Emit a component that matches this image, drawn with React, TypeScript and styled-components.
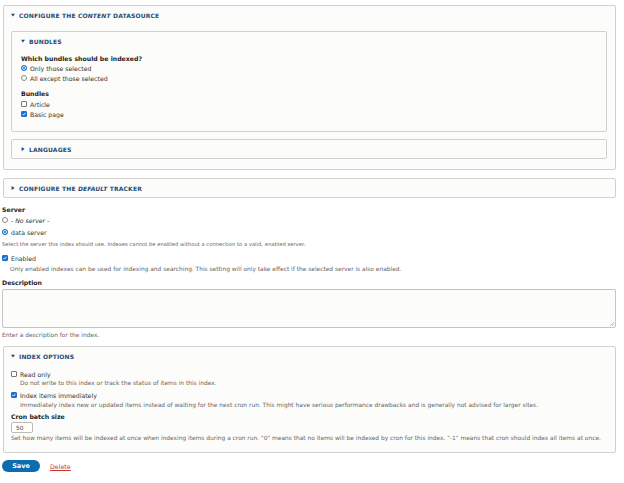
import React from 'react'
import styled, { createGlobalStyle } from 'styled-components'

const GlobalStyle = createGlobalStyle`
	body {
		margin: 0;
		background: #fff;
		font-family: "DejaVu Sans", "Liberation Sans", sans-serif;
		color: #222;
	}
`

const Page = styled.form`
	padding: 5px 8px 10px 2px;
`

const Box = styled.section<{ $gap?: number; $inner?: boolean }>`
	margin: ${p => p.$gap ?? 0}px 0 0 ${p => (p.$inner ? 0 : 1)}px;
	border: 1px solid #d0d0cc;
	border-radius: 2px;
	background: #fcfcfa;
`

const Summary = styled.div<{ $pad?: number }>`
	display: flex;
	align-items: center;
	gap: 4px;
	height: 18px;
	padding-left: ${p => p.$pad ?? 7}px;
	font-size: 6px;
	font-weight: bold;
	letter-spacing: 0.15px;
	text-transform: uppercase;
	color: #1f4b73;
	em {
		font-style: italic;
	}
`

const Body = styled.div<{ $pad: string }>`
	padding: ${p => p.$pad};
`

const Heading = styled.div<{ $gap?: number }>`
	margin-top: ${p => p.$gap ?? 0}px;
	font-size: 6.2px;
	font-weight: bold;
	line-height: 8px;
	color: #222;
`

const Row = styled.label<{ $h?: number; $gap?: number }>`
	display: flex;
	align-items: center;
	gap: 3px;
	margin-top: ${p => p.$gap ?? 0}px;
	height: ${p => p.$h ?? 10}px;
	font-size: 6.2px;
	color: #333;
	em {
		font-style: italic;
	}
`

const Hint = styled.div<{ $gap?: number; $indent?: number; $size?: number }>`
	margin-top: ${p => p.$gap ?? 0}px;
	padding-left: ${p => p.$indent ?? 0}px;
	font-size: ${p => p.$size ?? 5.9}px;
	line-height: 8px;
	color: #666;
	white-space: nowrap;
`

const RadioDot = styled.span<{ $on?: boolean }>`
	box-sizing: border-box;
	width: 6px;
	height: 6px;
	border-radius: 50%;
	border: 1px solid ${p => (p.$on ? '#1a6fd6' : '#8a8a8a')};
	background: ${p => (p.$on ? '#1a6fd6' : '#fff')};
	box-shadow: ${p => (p.$on ? 'inset 0 0 0 1px #fff' : 'none')};
	flex: none;
`

const Tick = styled.span<{ $on?: boolean }>`
	box-sizing: border-box;
	display: flex;
	align-items: center;
	justify-content: center;
	width: 6px;
	height: 6px;
	border-radius: 1px;
	border: 1px solid ${p => (p.$on ? '#1a6fd6' : '#777')};
	background: ${p => (p.$on ? '#1a6fd6' : '#fff')};
	flex: none;
`

const TextArea = styled.div`
	box-sizing: border-box;
	position: relative;
	margin-top: 2px;
	height: 39px;
	border: 1px solid #c4c4c0;
	border-radius: 2px;
	background: #fcfcfa;
`

const Grip = styled.svg`
	position: absolute;
	right: 1px;
	bottom: 1px;
`

const NumberInput = styled.div`
	box-sizing: border-box;
	display: flex;
	align-items: center;
	margin-top: 1px;
	width: 22px;
	height: 11px;
	padding-left: 4px;
	border: 1px solid #bdbdb8;
	border-radius: 2px;
	background: #fff;
	font-size: 5.8px;
	color: #444;
`

const Actions = styled.div`
	display: flex;
	align-items: center;
	gap: 10px;
	margin-top: 7px;
`

const SaveButton = styled.button`
	width: 38px;
	height: 12px;
	padding: 0;
	border: 0;
	border-radius: 8px;
	background: #0b6cb0;
	color: #fff;
	font-family: inherit;
	font-size: 6.5px;
	font-weight: bold;
`

const DeleteLink = styled.a`
	font-size: 6.3px;
	color: #c8372a;
	text-decoration: underline;
`

const Arrow = ({ open }: { open?: boolean }) => (
	<svg width="4" height="4" viewBox="0 0 4 4">
		{open ? <path d="M0 0.7h4L2 3.4z" fill="#1f4b73" /> : <path d="M0.6 0v4L3.6 2z" fill="#1f4b73" />}
	</svg>
)

const Radio = ({ on, children, h }: { on?: boolean; h?: number; children: React.ReactNode }) => (
	<Row $h={h}>
		<RadioDot $on={on} />
		<span>{children}</span>
	</Row>
)

const Check = ({ on, children, gap }: { on?: boolean; gap?: number; children: React.ReactNode }) => (
	<Row $gap={gap}>
		<Tick $on={on}>
			{on && (
				<svg width="4" height="4" viewBox="0 0 4 4">
					<path d="M0.5 2.1l1 1L3.5 0.8" stroke="#fff" strokeWidth="0.9" fill="none" />
				</svg>
			)}
		</Tick>
		<span>{children}</span>
	</Row>
)

const App: React.FC = () => {
	return (
		<>
			<GlobalStyle />
			<Page>
				<Box>
					<Summary>
						<Arrow open />
						<span>Configure the <em>content</em> datasource</span>
					</Summary>
					<Body $pad="0 8px 10px 7px">
						<Box $gap={7} $inner>
							<Summary $pad={9}>
								<Arrow open />
								<span>Bundles</span>
							</Summary>
							<Body $pad="5px 9px 12px 9px">
								<Heading>Which bundles should be indexed?</Heading>
								<Radio on>Only those selected</Radio>
								<Radio>All except those selected</Radio>
								<Heading $gap={7}>Bundles</Heading>
								<Check gap={1}>Article</Check>
								<Check on>Basic page</Check>
							</Body>
						</Box>
						<Box $gap={7} $inner>
							<Summary $pad={9}>
								<Arrow />
								<span>Languages</span>
							</Summary>
						</Box>
					</Body>
				</Box>

				<Box $gap={8}>
					<Summary>
						<Arrow />
						<span>Configure the <em>default</em> tracker</span>
					</Summary>
				</Box>

				<Heading $gap={8}>Server</Heading>
				<Radio h={12}><em>- No server -</em></Radio>
				<Radio h={12} on>data server</Radio>
				<Hint $gap={2} $size={5.25}>
					Select the server this index should use. Indexes cannot be enabled without a connection to a valid, enabled server.
				</Hint>
				<Check on gap={5}>Enabled</Check>
				<Hint $gap={2} $indent={8}>
					Only enabled indexes can be used for indexing and searching. This setting will only take effect if the selected server is also enabled.
				</Hint>
				<Heading $gap={6}>Description</Heading>
				<TextArea>
					<Grip width="5" height="5" viewBox="0 0 5 5">
						<path d="M5 1L1 5M5 3L3 5" stroke="#999" strokeWidth="0.6" />
					</Grip>
				</TextArea>
				<Hint $gap={3}>Enter a description for the index.</Hint>

				<Box $gap={7}>
					<Summary>
						<Arrow open />
						<span>Index options</span>
					</Summary>
					<Body $pad="4px 8px 10px 7px">
						<Check>Read only</Check>
						<Hint $indent={9}>Do not write to this index or track the status of items in this index.</Hint>
						<Check on gap={3}>Index items immediately</Check>
						<Hint $gap={1} $indent={9}>
							Immediately index new or updated items instead of waiting for the next cron run. This might have serious performance drawbacks and is generally not advised for larger sites.
						</Hint>
						<Heading $gap={4}>Cron batch size</Heading>
						<NumberInput>50</NumberInput>
						<Hint $gap={1}>
							Set how many items will be indexed at once when indexing items during a cron run. "0" means that no items will be indexed by cron for this index. "-1" means that cron should index all items at once.
						</Hint>
					</Body>
				</Box>

				<Actions>
					<SaveButton type="button">Save</SaveButton>
					<DeleteLink href="#">Delete</DeleteLink>
				</Actions>
			</Page>
		</>
	)
}

export default App
